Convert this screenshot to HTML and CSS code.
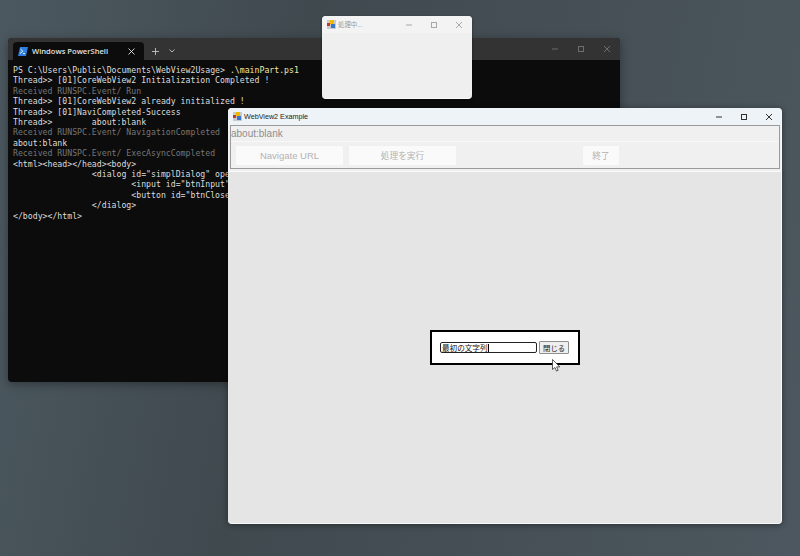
FILE: index.html
```html
<!DOCTYPE html>
<html>
<head>
  <meta charset="UTF-8">
  <meta name="viewport" content="width=device-width, initial-scale=1">
  <title>WebView2 Example</title>
  <link rel="stylesheet" href="styles.css">
</head>
<body>
  <div class="desktop">
    <!-- terminal -->
    <div class="window terminal">
      <div class="term-tabs">
        <div class="term-tab">
          <svg class="ps-icon" width="10" height="9" viewBox="0 0 10 9">
            <path d="M2 0h8L8 9H0z" fill="#2f7fe0"/>
            <path d="M2.5 2l2.4 2.3L2 6.4M5 6.6h2" fill="none" stroke="#fff" stroke-width="0.9"/>
          </svg>
          <span class="tab-title">Windows PowerShell</span>
          <svg class="tab-close" width="7" height="7" viewBox="0 0 7 7">
            <path d="M0.5 0.5l6 6M6.5 0.5l-6 6" stroke="#e4e4e4" stroke-width="0.9" fill="none"/>
          </svg>
        </div>
        <div class="tab-actions">
          <svg width="7" height="7" viewBox="0 0 7 7">
            <path d="M3.5 0v7M0 3.5h7" stroke="#c4c4c4" stroke-width="0.9" fill="none"/>
          </svg>
          <svg width="6" height="4" viewBox="0 0 6 4">
            <path d="M0.5 0.5L3 3l2.5-2.5" stroke="#c4c4c4" stroke-width="0.9" fill="none"/>
          </svg>
        </div>
        <div class="caption dark">
          <svg width="6" height="2" viewBox="0 0 6 2"><path d="M0 1h6" stroke="#6d6d6d"/></svg>
          <svg width="6" height="6" viewBox="0 0 6 6"><rect x="0.5" y="0.5" width="5" height="5" fill="none" stroke="#6d6d6d"/></svg>
          <svg width="6" height="6" viewBox="0 0 6 6"><path d="M0 0l6 6M6 0L0 6" stroke="#6d6d6d"/></svg>
        </div>
      </div>
      <pre class="term-body">PS C:\Users\Public\Documents\WebView2Usage&gt; <span class="yellow">.\mainPart.ps1</span>
Thread&gt;&gt; [01]CoreWebView2 Initialization Completed !
<span class="dim">Received RUNSPC.Event/ Run</span>
Thread&gt;&gt; [01]CoreWebView2 already initialized !
Thread&gt;&gt; [01]NaviCompleted-Success
Thread&gt;&gt;        about:blank
<span class="dim">Received RUNSPC.Event/ NavigationCompleted</span>
about:blank
<span class="dim">Received RUNSPC.Event/ ExecAsyncCompleted</span>
&lt;html&gt;&lt;head&gt;&lt;/head&gt;&lt;body&gt;
                &lt;dialog id="simplDialog" open&gt;
                        &lt;input id="btnInput"&gt;
                        &lt;button id="btnClose"&gt;
                &lt;/dialog&gt;
&lt;/body&gt;&lt;/html&gt;</pre>
    </div>

    <!-- progress window -->
    <div class="window progress">
      <div class="titlebar">
        <svg class="app-icon" width="9" height="9" viewBox="0 0 9 9">
          <rect width="9" height="9" fill="#c9c9d0"/>
          <rect x="0" y="3" width="3" height="3" fill="#c0392b"/>
          <rect x="3" y="0" width="4" height="4" fill="#f1b800"/>
          <rect x="4" y="4" width="4" height="4" fill="#3a74c8"/>
        </svg>
        <span class="win-title faded">処理中...</span>
        <div class="caption">
          <svg width="6" height="2" viewBox="0 0 6 2"><path d="M0 1h6" stroke="#a8a8a8"/></svg>
          <svg width="6" height="6" viewBox="0 0 6 6"><rect x="0.5" y="0.5" width="5" height="5" fill="none" stroke="#a8a8a8"/></svg>
          <svg width="6" height="6" viewBox="0 0 6 6"><path d="M0 0l6 6M6 0L0 6" stroke="#a8a8a8"/></svg>
        </div>
      </div>
    </div>

    <!-- main window -->
    <div class="window example">
      <div class="titlebar">
        <svg class="app-icon" width="9" height="9" viewBox="0 0 9 9">
          <rect width="9" height="9" fill="#c9c9d0"/>
          <rect x="0" y="3" width="3" height="3" fill="#c0392b"/>
          <rect x="3" y="0" width="4" height="4" fill="#f1b800"/>
          <rect x="4" y="4" width="4" height="4" fill="#3a74c8"/>
        </svg>
        <span class="win-title">WebView2 Example</span>
        <div class="caption">
          <svg width="6" height="2" viewBox="0 0 6 2"><path d="M0 1h6" stroke="#333"/></svg>
          <svg width="6" height="6" viewBox="0 0 6 6"><rect x="0.5" y="0.5" width="5" height="5" fill="none" stroke="#333"/></svg>
          <svg width="6" height="6" viewBox="0 0 6 6"><path d="M0 0l6 6M6 0L0 6" stroke="#333"/></svg>
        </div>
      </div>
      <div class="toolbar">
        <div class="address">about:blank</div>
        <div class="tool-row">
          <button class="tool-btn wide">Navigate URL</button>
          <button class="tool-btn wide jp">処理を実行</button>
          <button class="tool-btn end jp">終了</button>
        </div>
      </div>
      <div class="view">
        <div class="dialog">
          <div class="dialog-input">最初の文字列<span class="caret"></span></div>
          <button class="dialog-btn">閉じる</button>
        </div>
        <svg class="pointer" width="9" height="13" viewBox="0 0 9 13">
          <path d="M0.5 0.5v10l2.4-2 1.6 3.6 1.7-.8-1.6-3.4h3.2z" fill="#fff" stroke="#333" stroke-width="0.8"/>
        </svg>
      </div>
    </div>
  </div>
</body>
</html>
```

FILE: styles.css
```css
html, body {
  margin: 0;
  padding: 0;
}
body {
  font-family: "Noto Sans", "Noto Sans CJK JP", sans-serif;
}
.desktop {
  position: relative;
  width: 800px;
  height: 556px;
  overflow: hidden;
  background: linear-gradient(100deg, #4c5860 0%, #3f494e 35%, #454f55 65%, #4d575f 100%);
}
.window {
  position: absolute;
  display: flex;
  flex-direction: column;
  box-sizing: border-box;
  overflow: hidden;
}
.terminal {
  left: 8px;
  top: 38px;
  width: 612px;
  height: 344px;
  background: #0c0c0c;
  border-radius: 4px;
  box-shadow: 0 2px 10px rgba(0, 0, 0, 0.35);
}
.term-tabs {
  display: flex;
  align-items: flex-end;
  height: 22px;
  background: #333333;
}
.term-tab {
  display: flex;
  align-items: center;
  width: 131px;
  height: 18px;
  margin-left: 5px;
  box-sizing: border-box;
  padding: 0 9px 0 5px;
  background: #0c0c0c;
  border-radius: 4px 4px 0 0;
}
.ps-icon {
  margin-right: 4px;
}
.tab-title {
  flex: 1;
  font-family: "Open Sans", sans-serif;
  font-size: 7.6px;
  font-weight: 600;
  color: #e0e0e0;
}
.tab-actions {
  display: flex;
  align-items: center;
  gap: 10px;
  height: 18px;
  margin-left: 8px;
}
.caption {
  display: flex;
  align-items: center;
  gap: 19px;
  margin-left: auto;
}
.caption.dark {
  gap: 20px;
  height: 22px;
  padding-right: 1px;
  margin-right: 9px;
  align-self: flex-start;
}
.term-body {
  margin: 0;
  padding: 5px 5px 0;
  font-family: "DejaVu Sans Mono", monospace;
  font-size: 8.2px;
  line-height: 10.4px;
  color: #dcdcdc;
}
.yellow {
  color: #f0e8a4;
}
.dim {
  color: #767676;
}
.progress {
  left: 322px;
  top: 16px;
  width: 150px;
  height: 83px;
  background: #efefef;
  border-bottom: 1px solid #fafafa;
  border-radius: 4px;
  box-shadow: 0 1px 3px rgba(0, 0, 0, 0.4);
}
.titlebar {
  display: flex;
  align-items: center;
  flex: none;
  height: 17px;
  padding: 0 10px 0 5px;
}
.progress .titlebar {
  background: #f3f3f3;
}
.example {
  left: 228px;
  top: 108px;
  width: 554px;
  height: 416px;
  background: #f0f0f0;
  border-right: 1px solid #f8f8f8;
  border-bottom: 1px solid #f8f8f8;
  border-radius: 4px;
  box-shadow: 0 1px 6px rgba(0, 0, 0, 0.4);
}
.example .titlebar {
  padding-right: 9px;
  background: #edf3f6;
}
.app-icon {
  margin-right: 2px;
}
.win-title {
  font-family: "Liberation Sans", "Noto Sans CJK JP", sans-serif;
  font-size: 7.2px;
  color: #222222;
}
.win-title.faded {
  font-size: 6.4px;
  color: #9a9a9a;
}
.toolbar {
  display: flex;
  flex-direction: column;
  flex: none;
  box-sizing: border-box;
  height: 44px;
  margin: 0 1px 0 2px;
  border: 1px solid #9a9a9a;
  background: #f0f0f0;
}
.address {
  height: 15px;
  border-bottom: 1px solid #f8f8f8;
  font-family: "Liberation Sans", sans-serif;
  font-size: 10px;
  line-height: 15px;
  color: #8e8e8e;
}
.tool-row {
  display: flex;
  gap: 6px;
  padding: 4px 5px 0;
}
.tool-btn {
  height: 19px;
  padding: 0;
  border: none;
  border-radius: 1px;
  background: #fafafa;
  font-family: "Liberation Sans", "Noto Sans CJK JP", sans-serif;
  font-size: 9.5px;
  color: #b2b2b2;
}
.tool-btn.jp {
  font-size: 8.7px;
}
.tool-btn.wide {
  width: 107px;
}
.tool-btn.end {
  width: 36px;
  margin-left: 121px;
}
.view {
  position: relative;
  flex: 1;
  display: flex;
  justify-content: center;
  margin-top: 2px;
  padding-top: 158px;
  background: #e5e5e5;
  border-top: 1px solid #f8f8f8;
}
.dialog {
  display: flex;
  align-items: center;
  gap: 2px;
  box-sizing: border-box;
  width: 150px;
  height: 35px;
  margin-left: 1px;
  padding: 0 9px 0 8px;
  border: 2px solid #000000;
  background: #ffffff;
}
.dialog-input {
  display: flex;
  align-items: center;
  box-sizing: border-box;
  width: 98px;
  height: 11px;
  padding-left: 1px;
  border: 1.5px solid #222222;
  border-radius: 2px;
  font-family: "Noto Sans CJK JP", sans-serif;
  font-size: 7.6px;
  color: #111111;
}
.caret {
  width: 1px;
  height: 8px;
  background: #000000;
}
.dialog-btn {
  width: 30px;
  height: 13px;
  padding: 0;
  border: 1px solid #8f8f8f;
  border-radius: 1px;
  background: #efefef;
  font-family: "Noto Sans CJK JP", sans-serif;
  font-size: 7.4px;
  line-height: 1;
  color: #222222;
}
.pointer {
  position: absolute;
  left: 324px;
  top: 187px;
}
```
